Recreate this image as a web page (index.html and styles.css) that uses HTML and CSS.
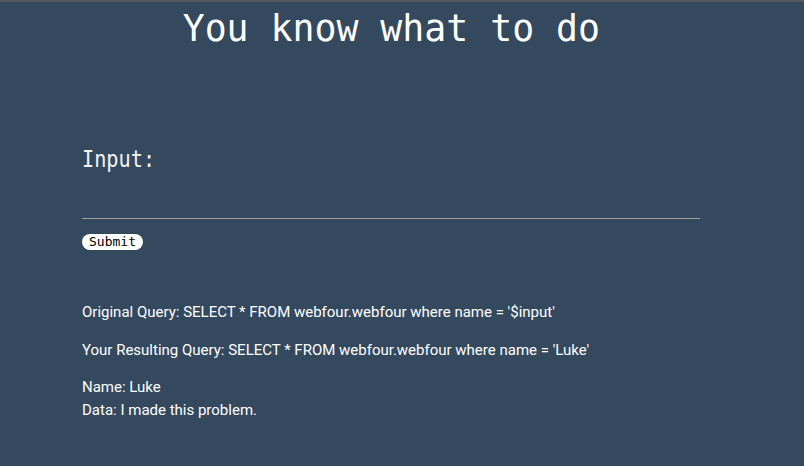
FILE: index.html
```html
<!DOCTYPE html>
<html>
<head>
<meta charset="utf-8">
<link rel="stylesheet" href="styles.css">
</head>
<body>
<div class="topbar"></div>
<div class="page">
  <h1 class="title"><span class="title-text">You know what to do</span></h1>
  <form class="form">
    <label class="label" for="inp">Input:</label>
    <input class="field" id="inp" type="text">
    <button class="submit" type="button">Submit</button>
  </form>
  <div class="results">
    <p class="line">Original Query: SELECT * FROM webfour.webfour where name = '$input'</p>
    <p class="line">Your Resulting Query: SELECT * FROM webfour.webfour where name = 'Luke'</p>
    <p class="line">Name: Luke<br>Data: I made this problem.</p>
  </div>
</div>
</body>
</html>
```
FILE: styles.css
```css
html, body {
  margin: 0;
  padding: 0;
  background: #34495e;
  height: 100%;
}
.topbar {
  height: 2px;
  background: #555a60;
}
.page {
  width: 618px;
  margin-left: 82px;
  color: #ffffff;
}
.title {
  font-family: "DejaVu Sans Mono", monospace;
  font-weight: normal;
  font-size: 38px;
  line-height: 48px;
  text-align: center;
  margin: 2px 0 0 0;
}
.title-text {
  display: inline-block;
  transform: scaleX(0.96);
  transform-origin: center;
}
.form {
  display: flex;
  flex-direction: column;
  align-items: flex-start;
  margin-top: 95px;
}
.label {
  font-family: "DejaVu Sans Mono", monospace;
  font-size: 23px;
  line-height: 24px;
  transform: scaleX(0.88);
  transform-origin: left center;
  color: #f4f4f4;
}
.field {
  width: 100%;
  box-sizing: border-box;
  margin-top: 14px;
  height: 34px;
  background: transparent;
  border: none;
  border-bottom: 1px solid #a0a0a0;
  color: #fff;
  outline: none;
  padding: 0;
}
.submit {
  margin-top: 15px;
  font-family: "DejaVu Sans Mono", monospace;
  font-size: 13px;
  line-height: 16px;
  height: 16px;
  padding: 0 7px;
  border: none;
  border-radius: 8px;
  background: #ffffff;
  color: #000;
}
.results {
  margin-top: 51px;
  font-family: Roboto, sans-serif;
  font-size: 15px;
  line-height: 22.5px;
}
.line {
  margin: 0 0 15px 0;
}
```
